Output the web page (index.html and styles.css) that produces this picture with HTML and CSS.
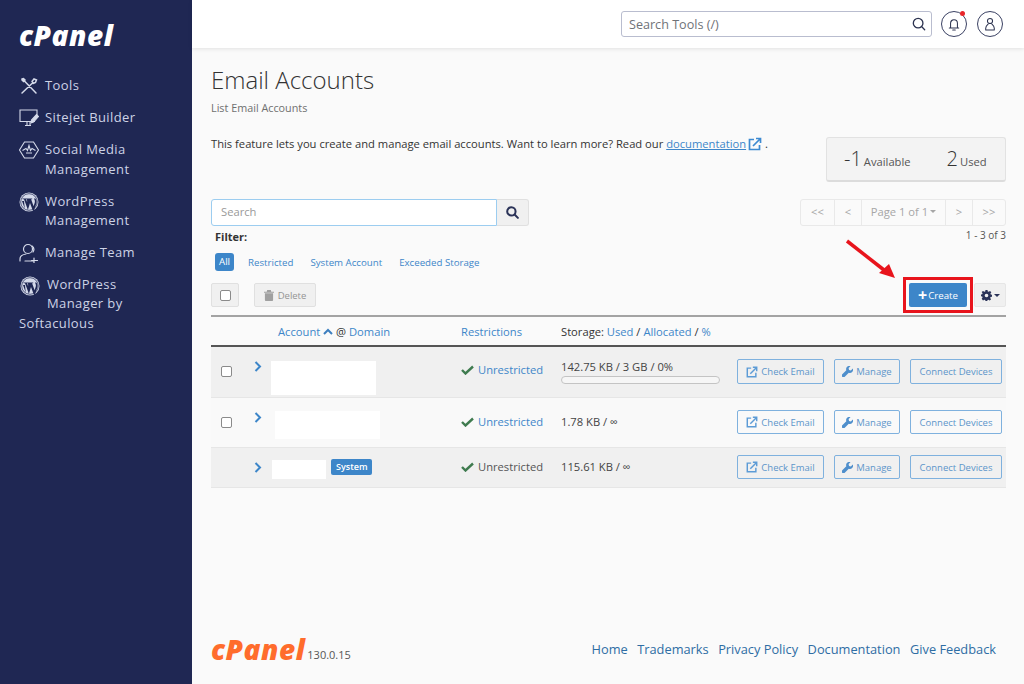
FILE: index.html
```html
<!DOCTYPE html>
<html lang="en">
<head>
    <title>Email Accounts - cPanel</title>
    <link rel="stylesheet" href="styles.css">
</head>
<body>
    <aside class="sidebar">
        <div class="logo">cPanel</div>
        <nav class="nav">
            <a class="nav-item">
                <svg class="nav-icon" viewBox="0 0 20 20" fill="none" stroke="#d5daea" stroke-width="1.500" stroke-linecap="round"><path d="M3 17 14 6.500M13 5.500l2-2.500 2.500 1-1 2.500-2.500 1M3.500 3 17 17M3 3l1.500-.5L6 4l-1.500 1.500L3 4z"/></svg>
                <span>Tools</span>
            </a>
            <a class="nav-item">
                <svg class="nav-icon" viewBox="0 0 20 20" fill="none" stroke="#d5daea" stroke-width="1.100"><path d="M16 13.500H1V2h17v7M6 17.500h6M8 14v3.500M11 14v3.500"/><path d="M12 15l.5-3 5-5.500 2 2-5 5.500z" fill="#d5daea"/></svg>
                <span>Sitejet Builder</span>
            </a>
            <a class="nav-item">
                <svg class="nav-icon" viewBox="0 0 20 20" fill="none" stroke="#d5daea" stroke-width="1.100"><path d="M5.500 2h9l5 8-5 8h-9l-5-8z"/><path d="M3.500 10.500 7 8.500l1.500 2L10 5.500l1.500 5 1.500-2 3.500 2M7 13h6"/></svg>
                <span>Social Media<br>Management</span>
            </a>
            <a class="nav-item">
                <svg class="nav-icon" viewBox="0 0 20 20"><use href="#wp-logo"/></svg>
                <span>WordPress<br>Management</span>
            </a>
            <a class="nav-item">
                <svg class="nav-icon" viewBox="0 0 20 20" fill="none" stroke="#d5daea" stroke-width="1.200" stroke-linecap="round"><circle cx="9" cy="6" r="4.500"/><path d="M13 4a4.500 4.500 0 0 1 1 6M1 19v-2c0-3 3-4.500 6-5M6 19h8M15 16v6M12.500 18.500h6" transform="translate(0 -1)"/></svg>
                <span>Manage Team</span>
            </a>
            <a class="nav-item nav-wrap">
                <svg class="nav-icon nav-float" viewBox="0 0 20 20"><use href="#wp-logo"/></svg>
                <span>WordPress Manager by Softaculous</span>
            </a>
        </nav>
    </aside>

    <svg class="defs">
        <symbol id="wp-logo" viewBox="0 0 20 20">
            <circle cx="10" cy="10" r="9.500" fill="#d5daea"/>
            <circle cx="10" cy="10" r="8.300" fill="none" stroke="#1f2753" stroke-width=".7"/>
            <path d="M3 6.500h5.200v.7l-1.100.1 2.400 7-.9 2.700L5 7.300l-1.100-.1zM8 6.500h5.200v.7l-1.100.1 2.500 7 1.200-3.800c.5-1.700-.4-3-.9-4h1.600c1.100 1.500 1.400 3.400.8 5.300l-2.600 7.500h-.6L11 11l-2 6.500h-.6zM5 9 3 9l2.800 7.800z" fill="#1f2753"/>
        </symbol>
    </svg>

    <div class="page">
        <header class="topbar">
            <div class="tool-search">
                <span>Search Tools (/)</span>
                <svg width="14" height="14" viewBox="0 0 16 16" fill="none" stroke="#2c3350" stroke-width="1.500" stroke-linecap="round"><circle cx="7" cy="7" r="5.500"/><path d="m11.200 11.200 3.300 3.300"/></svg>
            </div>
            <div class="round-btn">
                <svg width="12" height="13" viewBox="0 0 14 15" fill="none" stroke="#2c3350" stroke-width="1.200" stroke-linecap="round"><path d="M1.500 11.500h11M3 11.500V6a4 4 0 0 1 8 0v5.500M5.500 13.800h3"/></svg>
                <span class="notify-dot"></span>
            </div>
            <div class="round-btn">
                <svg width="12" height="14" viewBox="0 0 14 16" fill="none" stroke="#2c3350" stroke-width="1.200" stroke-linecap="round"><circle cx="7" cy="4.500" r="3"/><path d="M2 15v-2c0-2.500 2-4 2.800-4.800M12 15v-2c0-2.500-2-4-2.800-4.800M2 15h10"/></svg>
            </div>
        </header>

        <main class="content">
            <h1 class="title">Email Accounts</h1>
            <p class="subtitle">List Email Accounts</p>

            <section class="intro">
                <p class="intro-text">This feature lets you create and manage email accounts. Want to learn more? Read our <a class="doc-link">documentation</a>
                    <svg class="doc-icon" width="14" height="14" viewBox="0 0 14 14" fill="none" stroke="#3d8ad1" stroke-width="1.700"><path d="M11.500 8v4.500h-10v-10H6"/><path d="M5 9l7-7M8 1.500h4.500V6"/></svg> .</p>
                <div class="stats">
                    <span class="stat-num">-1</span><span class="stat-label">Available</span>
                    <span class="stat-num stat-used">2</span><span class="stat-label">Used</span>
                </div>
            </section>

            <section class="toolbar">
                <div class="search-col">
                    <div class="search-group">
                        <div class="search-input">Search</div>
                        <div class="search-btn">
                            <svg width="13" height="13" viewBox="0 0 14 14" fill="none" stroke="#2b3358" stroke-width="2.200" stroke-linecap="round"><circle cx="5.800" cy="5.800" r="4.500"/><path d="m9.500 9.500 3.300 3.300"/></svg>
                        </div>
                    </div>
                    <div class="filter-label">Filter:</div>
                    <div class="filters">
                        <span class="pill">All</span>
                        <a>Restricted</a>
                        <a>System Account</a>
                        <a>Exceeded Storage</a>
                    </div>
                </div>
                <div class="paging-col">
                    <div class="pager">
                        <span class="pg-first">&lt;&lt;</span>
                        <span class="pg-prev">&lt;</span>
                        <span class="pg-page">Page 1 of 1<i class="caret"></i></span>
                        <span class="pg-prev">&gt;</span>
                        <span class="pg-first">&gt;&gt;</span>
                    </div>
                    <div class="range">1 - 3 of 3</div>
                </div>
            </section>

            <section class="actions">
                <div class="check-btn"><input type="checkbox" class="check"></div>
                <div class="delete-btn">
                    <svg width="10" height="11" viewBox="0 0 11 12" fill="#a0a0a0"><path d="M0 2h11v1H0zM3.500 0h4l.5 2H3zM1 3.500h9V11a1 1 0 0 1-1 1H2a1 1 0 0 1-1-1z"/></svg>
                    Delete
                </div>
                <div class="spacer"></div>
                <div class="create-wrap">
                    <div class="create-btn"><b class="plus">+</b>Create</div>
                </div>
                <div class="gear-btn">
                    <svg width="11" height="11" viewBox="0 0 12 12"><path fill="#2b3358" fill-rule="evenodd" d="M4.900 0h2.200l.3 1.600 1 .4L9.800 1l1.500 1.500-1 1.400.4 1 1.300.3v2.100l-1.600.3-.4 1 1 1.400-1.500 1.500-1.400-1-1 .4-.3 1.600H4.900l-.3-1.600-1-.4-1.400 1L.7 9.500l1-1.400-.4-1L0 6.900V4.900l1.300-.3.400-1-1-1.400L2.200 1l1.400 1 1-.4zM6 4a2 2 0 1 0 0 4 2 2 0 0 0 0-4z"/></svg>
                    <i class="caret caret-dark"></i>
                </div>
            </section>

            <table class="accounts">
                <thead>
                    <tr>
                        <th class="col-check"></th>
                        <th class="col-account"><a>Account</a> <svg class="sort-up" width="10" height="7" viewBox="0 0 10 7" fill="none" stroke="#3d7fbf" stroke-width="2"><path d="m1 6 4-4 4 4"/></svg> @ <a>Domain</a></th>
                        <th class="col-restrict"><a>Restrictions</a></th>
                        <th class="col-storage">Storage: <a>Used</a> / <a>Allocated</a> / <a>%</a></th>
                        <th class="col-actions"></th>
                    </tr>
                </thead>
                <tbody>
                    <tr class="row-a">
                        <td><input type="checkbox" class="check"></td>
                        <td><div class="account-cell">
                            <svg class="chevron chevron-high" width="8" height="11" viewBox="0 0 8 11" fill="none" stroke="#3d86c9" stroke-width="2"><path d="m1.500 1 4.500 4.500-4.500 4.500"/></svg>
                            <div class="mask mask-one"></div>
                        </div></td>
                        <td class="restrict"><svg class="tick" width="13" height="10" viewBox="0 0 13 10" fill="none" stroke="#3f7b4f" stroke-width="2.400"><path d="m1 5 3.500 3.500L12 1.500"/></svg><a>Unrestricted</a></td>
                        <td>
                            <div class="usage usage-bar">142.75 KB / 3 GB / 0%</div>
                            <div class="bar"></div>
                        </td>
                        <td><div class="row-btns">
                            <span class="btn btn-check"><svg width="12" height="12" viewBox="0 0 14 14" fill="none" stroke="#5c9bd6" stroke-width="1.700"><path d="M11.500 8v4.500h-10v-10H6"/><path d="M5 9l7-7M8 1.500h4.500V6"/></svg>Check Email</span>
                            <span class="btn btn-manage"><svg width="11" height="11" viewBox="0 0 12 12" fill="#4f8fcc"><path d="M11.800 2.700 9.700 4.800 7.700 4.300 7.200 2.300 9.300.2a3.500 3.500 0 0 0-4.600 4.400L.3 9a1.800 1.800 0 0 0 2.700 2.700l4.400-4.400a3.500 3.500 0 0 0 4.400-4.600z"/></svg>Manage</span>
                            <span class="btn btn-connect">Connect Devices</span>
                        </div></td>
                    </tr>
                    <tr class="row-b">
                        <td><input type="checkbox" class="check"></td>
                        <td><div class="account-cell">
                            <svg class="chevron chevron-high" width="8" height="11" viewBox="0 0 8 11" fill="none" stroke="#3d86c9" stroke-width="2"><path d="m1.500 1 4.500 4.500-4.500 4.500"/></svg>
                            <div class="mask mask-two"></div>
                        </div></td>
                        <td class="restrict"><svg class="tick" width="13" height="10" viewBox="0 0 13 10" fill="none" stroke="#3f7b4f" stroke-width="2.400"><path d="m1 5 3.500 3.500L12 1.500"/></svg><a>Unrestricted</a></td>
                        <td><div class="usage usage-plain">1.78 KB / ∞</div></td>
                        <td><div class="row-btns">
                            <span class="btn btn-check"><svg width="12" height="12" viewBox="0 0 14 14" fill="none" stroke="#5c9bd6" stroke-width="1.700"><path d="M11.500 8v4.500h-10v-10H6"/><path d="M5 9l7-7M8 1.500h4.500V6"/></svg>Check Email</span>
                            <span class="btn btn-manage"><svg width="11" height="11" viewBox="0 0 12 12" fill="#4f8fcc"><path d="M11.800 2.700 9.700 4.800 7.700 4.300 7.200 2.300 9.300.2a3.500 3.500 0 0 0-4.600 4.400L.3 9a1.800 1.800 0 0 0 2.700 2.700l4.400-4.400a3.500 3.500 0 0 0 4.400-4.600z"/></svg>Manage</span>
                            <span class="btn btn-connect">Connect Devices</span>
                        </div></td>
                    </tr>
                    <tr class="row-c">
                        <td></td>
                        <td><div class="account-cell">
                            <svg class="chevron" width="8" height="11" viewBox="0 0 8 11" fill="none" stroke="#3d86c9" stroke-width="2"><path d="m1.500 1 4.500 4.500-4.500 4.500"/></svg>
                            <div class="mask mask-three"></div>
                            <span class="badge">System</span>
                        </div></td>
                        <td class="restrict"><svg class="tick" width="13" height="10" viewBox="0 0 13 10" fill="none" stroke="#3f7b4f" stroke-width="2.400"><path d="m1 5 3.500 3.500L12 1.500"/></svg>Unrestricted</td>
                        <td><div class="usage usage-plain">115.61 KB / ∞</div></td>
                        <td><div class="row-btns">
                            <span class="btn btn-check"><svg width="12" height="12" viewBox="0 0 14 14" fill="none" stroke="#5c9bd6" stroke-width="1.700"><path d="M11.500 8v4.500h-10v-10H6"/><path d="M5 9l7-7M8 1.500h4.500V6"/></svg>Check Email</span>
                            <span class="btn btn-manage"><svg width="11" height="11" viewBox="0 0 12 12" fill="#4f8fcc"><path d="M11.800 2.700 9.700 4.800 7.700 4.300 7.200 2.300 9.300.2a3.500 3.500 0 0 0-4.600 4.400L.3 9a1.800 1.800 0 0 0 2.700 2.700l4.400-4.400a3.500 3.500 0 0 0 4.400-4.600z"/></svg>Manage</span>
                            <span class="btn btn-connect">Connect Devices</span>
                        </div></td>
                    </tr>
                </tbody>
            </table>

            <footer class="footer">
                <span class="logo logo-orange">cPanel</span>
                <span class="version">130.0.15</span>
                <div class="spacer"></div>
                <a>Home</a>
                <a>Trademarks</a>
                <a>Privacy Policy</a>
                <a>Documentation</a>
                <a>Give Feedback</a>
            </footer>
        </main>
    </div>

    <!-- annotation drawn over the screenshot -->
    <svg class="arrow" width="60" height="56" viewBox="0 0 60 56">
        <path d="M2 2 39 31" stroke="#e8141c" stroke-width="3.500" fill="none"/>
        <path d="M34 34 50 39 44 25z" fill="#e8141c"/>
    </svg>
</body>
</html>
```

FILE: styles.css
```css
* {
    box-sizing: border-box;
}

body {
    margin: 0;
    height: 684px;
    overflow: hidden;
    display: flex;
    background-color: #fafafa;
    color: #333;
    font-family: "Open Sans", sans-serif;
    font-size: 11.200px;
}

a {
    color: #3d86c9;
}

.defs {
    position: absolute;
    width: 0;
    height: 0;
}

.spacer {
    flex: 1;
}

.sidebar {
    width: 192px;
    flex-shrink: 0;
    background-color: #1f2753;
    padding: 20px 10px 0 19px;
}

.logo {
    font-family: "Open Sans", sans-serif;
    font-weight: 800;
    font-style: italic;
    font-size: 28px;
    line-height: 30px;
    letter-spacing: .5px;
    color: #fff;
}

.nav {
    margin-top: 26px;
}

.nav-item {
    display: flex;
    gap: 6px;
    color: #cdd3e6;
    font-size: 13px;
    line-height: 19.500px;
    letter-spacing: .4px;
    margin-bottom: 12.500px;
}

.nav-item:first-child {
    margin-bottom: 11.500px;
}

.nav-icon {
    width: 20px;
    height: 20px;
    flex-shrink: 0;
}

.nav-wrap {
    display: block;
    margin-top: -1px;
    width: 125px;
}

.nav-float {
    float: left;
    margin: 1px 7px 14px 1px;
}

.page {
    flex: 1;
    display: flex;
    flex-direction: column;
    min-width: 0;
}

.topbar {
    height: 48px;
    background-color: #fff;
    box-shadow: 0 1px 4px rgba(0, 0, 0, .1);
    display: flex;
    align-items: center;
    justify-content: flex-end;
    padding: 0 21px 0 0;
    gap: 10px;
}

.tool-search {
    width: 311px;
    height: 26px;
    border: 1px solid #b9bdcf;
    border-radius: 3px;
    margin-right: -1px;
    display: flex;
    align-items: center;
    justify-content: space-between;
    padding: 0 5px 0 7px;
    font-size: 12.600px;
    color: #6f7278;
}

.round-btn {
    position: relative;
    width: 26px;
    height: 26px;
    border: 1px solid #3a4163;
    border-radius: 50%;
    display: flex;
    align-items: center;
    justify-content: center;
}

.notify-dot {
    position: absolute;
    top: -1px;
    right: 1px;
    width: 5px;
    height: 5px;
    border-radius: 50%;
    background-color: #e8262a;
}

.content {
    flex: 1;
    display: flex;
    flex-direction: column;
    padding: 0 18px 0 19px;
}

.title {
    margin: 16px 0 0;
    font-size: 24px;
    line-height: 32px;
    font-weight: 300;
    color: #333;
}

.subtitle {
    margin: 3px 0 0;
    font-size: 10.800px;
    line-height: 17px;
    color: #6f6f6f;
}

.intro {
    display: flex;
    justify-content: space-between;
    align-items: flex-start;
    margin-top: 21px;
}

.intro-text {
    margin: 0;
    line-height: 13px;
}

.doc-link {
    text-decoration: underline;
}

.doc-icon {
    vertical-align: -3px;
    margin-left: -1px;
}

.stats {
    width: 180px;
    height: 45px;
    background-color: #f3f3f3;
    border: 1px solid #e2e2e2;
    border-bottom: 2px solid #dcdcdc;
    border-radius: 3px;
    display: flex;
    align-items: baseline;
    padding: 6px 0 0 17px;
    color: #555;
}

.stat-num {
    font-size: 20px;
    font-weight: 300;
    line-height: 30px;
    color: #333;
    margin-right: 2px;
}

.stat-used {
    margin-left: 36px;
    margin-right: 2px;
}

.toolbar {
    display: flex;
    justify-content: space-between;
    align-items: flex-start;
    margin-top: 17px;
}

.search-group {
    display: flex;
    height: 27px;
    width: 318px;
}

.search-input {
    flex: 1;
    background-color: #fff;
    border: 1px solid #9ccdf0;
    border-radius: 3px 0 0 3px;
    padding: 4px 9px;
    color: #999;
    line-height: 15px;
}

.search-btn {
    width: 32px;
    background-color: #f0f0f0;
    border: 1px solid #e0e0e0;
    border-left: 0;
    border-radius: 0 3px 3px 0;
    display: flex;
    align-items: center;
    justify-content: center;
}

.filter-label {
    margin: 3px 0 0 4px;
    font-weight: 700;
    font-size: 11px;
    line-height: 15px;
}

.filters {
    display: flex;
    align-items: center;
    gap: 17px;
    margin: 9px 0 0 4px;
    font-size: 9.700px;
}

.pill {
    background-color: #3d86c9;
    color: #fff;
    border-radius: 3px;
    padding: 2px 4px;
    height: 18px;
    line-height: 14px;
    margin-right: -3px;
}

.paging-col {
    text-align: right;
}

.pager {
    display: flex;
    height: 27px;
    border: 1px solid #e9e9e9;
    border-radius: 3px;
    color: #a6a6a6;
    background-color: #fafafa;
}

.pager span {
    display: flex;
    align-items: center;
    justify-content: center;
    padding-bottom: 2px;
    border-left: 1px solid #e9e9e9;
}

.pager span:first-child {
    border-left: 0;
}

.pg-first {
    width: 33px;
}

.pg-prev {
    width: 27px;
}

.pg-page {
    width: 84px;
}

.caret {
    display: inline-block;
    margin-left: 2px;
    border-top: 3px solid #a6a6a6;
    border-left: 3px solid transparent;
    border-right: 3px solid transparent;
}

.caret-dark {
    border-top-color: #2b3358;
}

.range {
    margin-top: 2px;
    font-size: 10px;
    line-height: 14px;
    color: #555;
}

.actions {
    display: flex;
    align-items: center;
    height: 24px;
    margin-top: 12px;
}

.check-btn {
    width: 28px;
    height: 24px;
    background-color: #f0f0f0;
    border: 1px solid #e0e0e0;
    border-radius: 2px;
    display: flex;
    align-items: center;
    justify-content: center;
}

.check {
    appearance: none;
    display: block;
    margin: 0;
    width: 11px;
    height: 11px;
    background-color: #fff;
    border: 1px solid #8a8a8a;
    border-radius: 2px;
}

.delete-btn {
    width: 62px;
    height: 24px;
    margin-left: 15px;
    background-color: #f0f0f0;
    border: 1px solid #e0e0e0;
    border-radius: 2px;
    display: flex;
    align-items: center;
    justify-content: center;
    gap: 4px;
    font-size: 9.500px;
    color: #949494;
}

/* red highlight around the button is part of the annotation */
.create-wrap {
    border: 3px solid #e8141c;
    padding: 3px;
    margin-right: 1px;
}

.create-btn {
    width: 58px;
    height: 24px;
    background-color: #3d86c9;
    border-radius: 2px;
    color: #fff;
    font-size: 9.700px;
    display: flex;
    align-items: center;
    justify-content: center;
}

.plus {
    font-size: 16px;
    line-height: 14px;
    margin-right: 1px;
}

.gear-btn {
    width: 32px;
    height: 24px;
    background-color: #f0f0f0;
    border: 1px solid #e6e6e6;
    border-radius: 2px;
    display: flex;
    align-items: center;
    justify-content: center;
}

.accounts {
    width: 795px;
    margin-top: 8px;
    border-collapse: collapse;
    table-layout: fixed;
}

.accounts th {
    height: 30px;
    border-top: 2px solid #a3a3a3;
    border-bottom: 2px solid #555;
    padding: 0;
    text-align: left;
    font-size: 11.200px;
    font-weight: 400;
}

.col-check {
    width: 30px;
}

.col-account {
    width: 220px;
    padding-left: 37px !important;
}

.col-restrict {
    width: 100px;
}

.col-storage {
    width: 176px;
}

.sort-up {
    vertical-align: 1px;
}

.accounts td {
    padding: 0;
    border-bottom: 1px solid #e6e6e6;
    vertical-align: middle;
}

.accounts td:first-child {
    padding-left: 10px;
}

.row-a {
    height: 51px;
    background-color: #f0f0f0;
}

.row-b {
    height: 50px;
    background-color: #f9f9f9;
}

.row-c {
    height: 40px;
    background-color: #f0f0f0;
}

.account-cell {
    display: flex;
    align-items: center;
    padding-left: 13px;
}

.chevron {
    flex-shrink: 0;
}

.chevron-high {
    margin-bottom: 10px;
}

.mask {
    background-color: #fff;
}

.mask-one {
    width: 105px;
    height: 34px;
    margin: 12px 0 0 9px;
}

.mask-two {
    width: 105px;
    height: 28px;
    margin: 6px 0 0 13px;
}

.mask-three {
    width: 54px;
    height: 19px;
    margin: 5px 0 0 10px;
}

.badge {
    margin-left: 5px;
    background-color: #3d86c9;
    color: #fff;
    font-size: 9px;
    font-weight: 600;
    line-height: 16px;
    padding: 0 5px;
    border-radius: 2px;
}

.accounts .restrict {
    color: #555;
    padding-bottom: 2px;
}

.accounts .row-a .restrict {
    padding-bottom: 4px;
}

.tick {
    margin-right: 4px;
    vertical-align: -1px;
}

.usage {
    color: #444;
}

.usage-plain {
    padding-bottom: 2px;
}

.usage-bar {
    line-height: 14px;
}

.bar {
    width: 159px;
    height: 8px;
    margin-top: 2px;
    border: 1px solid #c4c4c4;
    border-radius: 4px;
    background-color: #f6f6f6;
}

.row-btns {
    display: flex;
    align-items: center;
    gap: 10px;
}

.btn {
    height: 24px;
    border: 1px solid #7fb1de;
    border-radius: 2px;
    display: flex;
    align-items: center;
    justify-content: center;
    gap: 3px;
    font-size: 9.500px;
    color: #5c95ca;
}

.row-a .btn {
    height: 25px;
}

.btn-check {
    width: 87px;
}

.btn-manage {
    width: 66px;
}

.btn-connect {
    width: 92px;
}

.footer {
    margin-top: auto;
    margin-bottom: 20px;
    display: flex;
    align-items: center;
    gap: 9.500px;
    padding-right: 10px;
    height: 30px;
    font-size: 12.800px;
}

.footer a {
    color: #2e6da4;
}

.logo-orange {
    color: #ff6c2c;
    margin-right: -7.500px;
}

.version {
    font-size: 11px;
    color: #555;
    margin-top: 10px;
}

/* annotation */
.arrow {
    position: absolute;
    left: 845px;
    top: 239px;
}
```
